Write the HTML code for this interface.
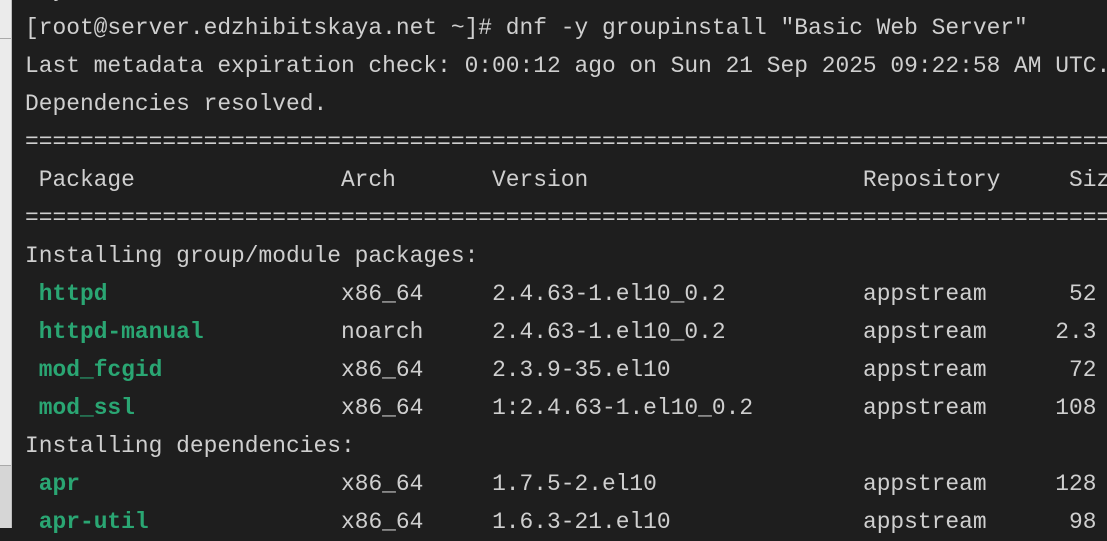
<!DOCTYPE html>
<html><head><meta charset="utf-8"><style>
html,body{margin:0;padding:0;width:1107px;height:528px;overflow:hidden;background:#1e1e1e}
.strip{position:absolute;left:0;top:0;width:11px;height:528px;background:#ebebeb;border-right:1px solid #bdbdbd}
.strip .a{position:absolute;left:0;top:38px;width:11px;height:1px;background:#aaa}
.strip .b{position:absolute;left:0;top:465px;width:11px;height:1px;background:#aaa}
.strip .c{position:absolute;left:0;top:466px;width:11px;height:62px;background:#d6d6d6}
pre{position:absolute;left:25px;top:-29px;margin:0;font-family:"Liberation Mono",monospace;font-size:22.9px;line-height:38px;color:#cfcfcf;white-space:pre}
b{color:#2aa673;font-weight:bold}
</style></head><body>
<div class="strip"><div class="a"></div><div class="b"></div><div class="c"></div></div>
<pre>  y
[root@server.edzhibitskaya.net ~]# dnf -y groupinstall "Basic Web Server"
Last metadata expiration check: 0:00:12 ago on Sun 21 Sep 2025 09:22:58 AM UTC.
Dependencies resolved.
================================================================================
 Package               Arch       Version                    Repository     Size
================================================================================
Installing group/module packages:
 <b>httpd</b>                 x86_64     2.4.63-1.el10_0.2          appstream      52
 <b>httpd-manual</b>          noarch     2.4.63-1.el10_0.2          appstream     2.3
 <b>mod_fcgid</b>             x86_64     2.3.9-35.el10              appstream      72
 <b>mod_ssl</b>               x86_64     1:2.4.63-1.el10_0.2        appstream     108
Installing dependencies:
 <b>apr</b>                   x86_64     1.7.5-2.el10               appstream     128
 <b>apr-util</b>              x86_64     1.6.3-21.el10              appstream      98
</pre>
</body></html>
